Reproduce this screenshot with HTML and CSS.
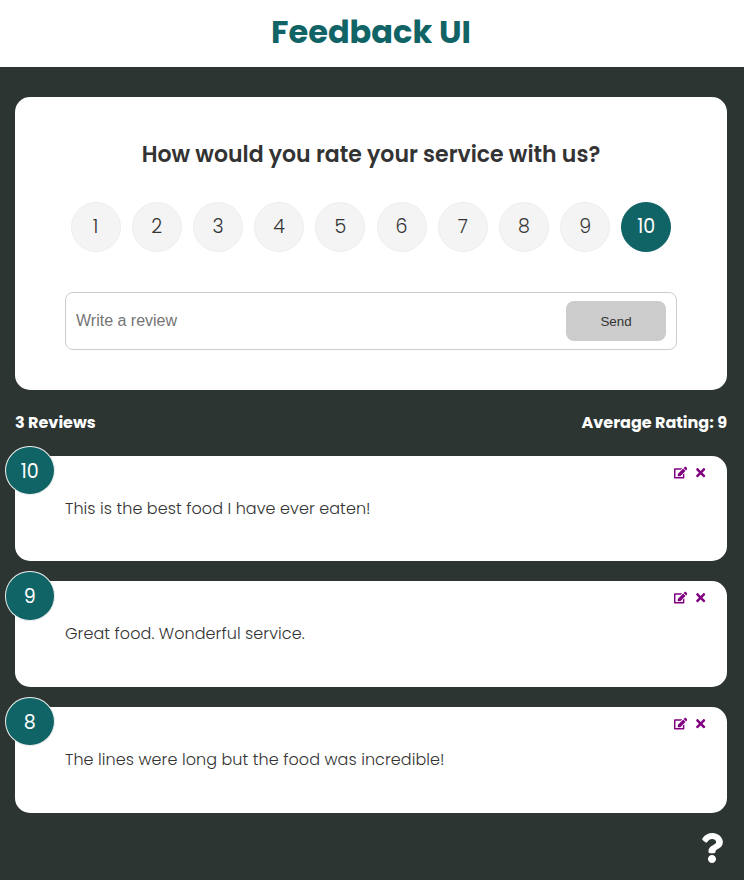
FILE: index.html
```html
<!DOCTYPE html>
<html lang="en">
<head>
<meta charset="utf-8">
<title>Feedback UI</title>
<link rel="stylesheet" href="styles.css">
</head>
<body>
<svg class="sprite" aria-hidden="true">
  <symbol id="edit" viewBox="0 0 576 512"><path d="M402.6 83.2l90.2 90.2c3.8 3.8 3.8 10 0 13.8L274.4 405.6l-92.8 10.3c-12.4 1.4-22.9-9.1-21.5-21.5l10.3-92.8L388.8 83.2c3.8-3.8 10-3.8 13.8 0zm162-22.9l-48.8-48.8c-15.2-15.2-39.9-15.2-55.2 0l-35.4 35.4c-3.8 3.8-3.8 10 0 13.8l90.2 90.2c3.8 3.8 10 3.8 13.8 0l35.4-35.4c15.2-15.3 15.2-40 0-55.2zM384 346.2V448H64V128h229.8c3.2 0 6.2-1.3 8.5-3.5l40-40c7.6-7.6 2.2-20.5-8.5-20.5H48C21.5 64 0 85.5 0 112v352c0 26.5 21.5 48 48 48h352c26.5 0 48-21.5 48-48V306.2c0-10.7-12.9-16-20.5-8.5l-40 40c-2.2 2.3-3.5 5.3-3.5 8.5z"/></symbol>
  <symbol id="times" viewBox="0 0 352 512"><path d="M242.72 256l100.07-100.07c12.28-12.28 12.28-32.19 0-44.48l-22.24-22.24c-12.28-12.28-32.19-12.28-44.48 0L176 189.28 75.93 89.21c-12.28-12.28-32.19-12.28-44.48 0L9.21 111.45c-12.28 12.28-12.28 32.19 0 44.48L109.28 256 9.21 356.07c-12.28 12.28-12.28 32.19 0 44.48l22.24 22.24c12.28 12.28 32.2 12.28 44.48 0L176 322.72l100.07 100.07c12.28 12.28 32.2 12.28 44.48 0l22.24-22.24c12.28-12.28 12.28-32.19 0-44.48L242.72 256z"/></symbol>
</svg>
<header class="header"><h1 class="title">Feedback UI</h1></header>
<main class="container">
  <form class="card form">
    <h2 class="question">How would you rate your service with us?</h2>
    <ul class="rating">
      <li>1</li><li>2</li><li>3</li><li>4</li><li>5</li><li>6</li><li>7</li><li>8</li><li>9</li><li class="selected">10</li>
    </ul>
    <div class="input-group">
      <input class="input" type="text" placeholder="Write a review">
      <button class="send" type="button">Send</button>
    </div>
  </form>
  <div class="stats"><h4>3 Reviews</h4><h4>Average Rating: 9</h4></div>
  <article class="card review">
    <div class="badge">10</div>
    <div class="actions"><svg><use href="#edit"/></svg><svg><use href="#times"/></svg></div>
    <p class="text">This is the best food I have ever eaten!</p>
  </article>
  <article class="card review">
    <div class="badge">9</div>
    <div class="actions"><svg><use href="#edit"/></svg><svg><use href="#times"/></svg></div>
    <p class="text">Great food. Wonderful service.</p>
  </article>
  <article class="card review">
    <div class="badge">8</div>
    <div class="actions"><svg><use href="#edit"/></svg><svg><use href="#times"/></svg></div>
    <p class="text">The lines were long but the food was incredible!</p>
  </article>
  <div class="about">
    <svg viewBox="0 0 384 512"><path d="M202.021 0C122.202 0 70.503 32.703 29.914 91.026c-7.363 10.58-5.093 25.086 5.178 32.874l43.138 32.709c10.373 7.865 25.132 6.026 33.253-4.148 25.049-31.381 43.63-49.449 82.757-49.449 30.764 0 68.816 19.799 68.816 49.631 0 22.552-18.617 34.134-48.993 51.164-35.423 19.86-82.299 44.576-82.299 106.405V320c0 13.255 10.745 24 24 24h72.471c13.255 0 24-10.745 24-24v-5.773c0-42.86 125.268-44.645 125.268-160.627C377.504 66.256 286.902 0 202.021 0zM192 373.459c-38.196 0-69.271 31.075-69.271 69.271 0 38.195 31.075 69.27 69.271 69.27s69.271-31.075 69.271-69.271-31.075-69.27-69.271-69.27z"/></svg>
  </div>
</main>
</body>
</html>
```
FILE: styles.css
```css
* { box-sizing: border-box; margin: 0; padding: 0; }
body {
  min-height: 880px;
  background: #2c3531;
  color: #333;
  font-family: Poppins, Inter, sans-serif;
  font-size: 16px;
  font-weight: 300;
  line-height: 1.6;
}
.sprite { display: none; }
.header { height: 67px; padding: 6px 2px 0 0; background: #fff; text-align: center; }
.title { color: #116466; font-size: 32px; font-weight: 700; white-space: nowrap; }
.container { padding: 30px 17px 0 15px; }
.card { background: #fff; border-radius: 15px; }
.form { height: 293px; padding: 40px 50px; }
.question { height: 35px; font-size: 22px; font-weight: 600; line-height: 35px; text-align: center; white-space: nowrap; }
.rating { display: flex; justify-content: space-around; margin: 30px 0 40px; list-style: none; }
.rating li {
  width: 50px; height: 50px;
  border: 1px solid #eee; border-radius: 50%;
  background: #f4f4f4;
  font-size: 19px; line-height: 48px; text-align: center;
}
.rating .selected { background: #116466; border-color: #116466; color: #fff; font-weight: 400; }
.input-group {
  display: flex; align-items: center;
  height: 58px; padding: 0 10px;
  border: 1px solid #ccc; border-radius: 8px;
}
.input {
  flex: 1; min-width: 0; height: 40px;
  border: 0; outline: 0; background: none;
  font: 16px "Liberation Sans", Arial, sans-serif;
}
.send {
  width: 100px; height: 40px;
  border: 0; border-radius: 8px;
  background: #ccc; color: #333;
  font: 13.333px "Liberation Sans", Arial, sans-serif;
}
.stats { display: flex; justify-content: space-between; height: 65.8px; padding-top: 20px; color: #fff; }
.stats h4 { font-weight: 700; line-height: 25.6px; white-space: nowrap; }
.review { position: relative; height: 105.6px; margin-bottom: 20px; padding: 40px 50px; }
.badge {
  position: absolute; top: -10px; left: -10px;
  width: 49.6px; height: 49.2px;
  border: 1px solid #eee; border-radius: 50%;
  background: #116466; color: #fff;
  font-size: 19px; font-weight: 400; line-height: 49.4px; text-align: center;
}
.actions { position: absolute; top: 10px; right: 20px; display: flex; gap: 6.7px; fill: purple; }
.actions svg { width: 13.33px; height: 13.33px; }
.text { letter-spacing: 0.07px; white-space: nowrap; }
.about { display: flex; justify-content: flex-end; }
.about svg { width: 30px; height: 30px; fill: #fff; }
```
